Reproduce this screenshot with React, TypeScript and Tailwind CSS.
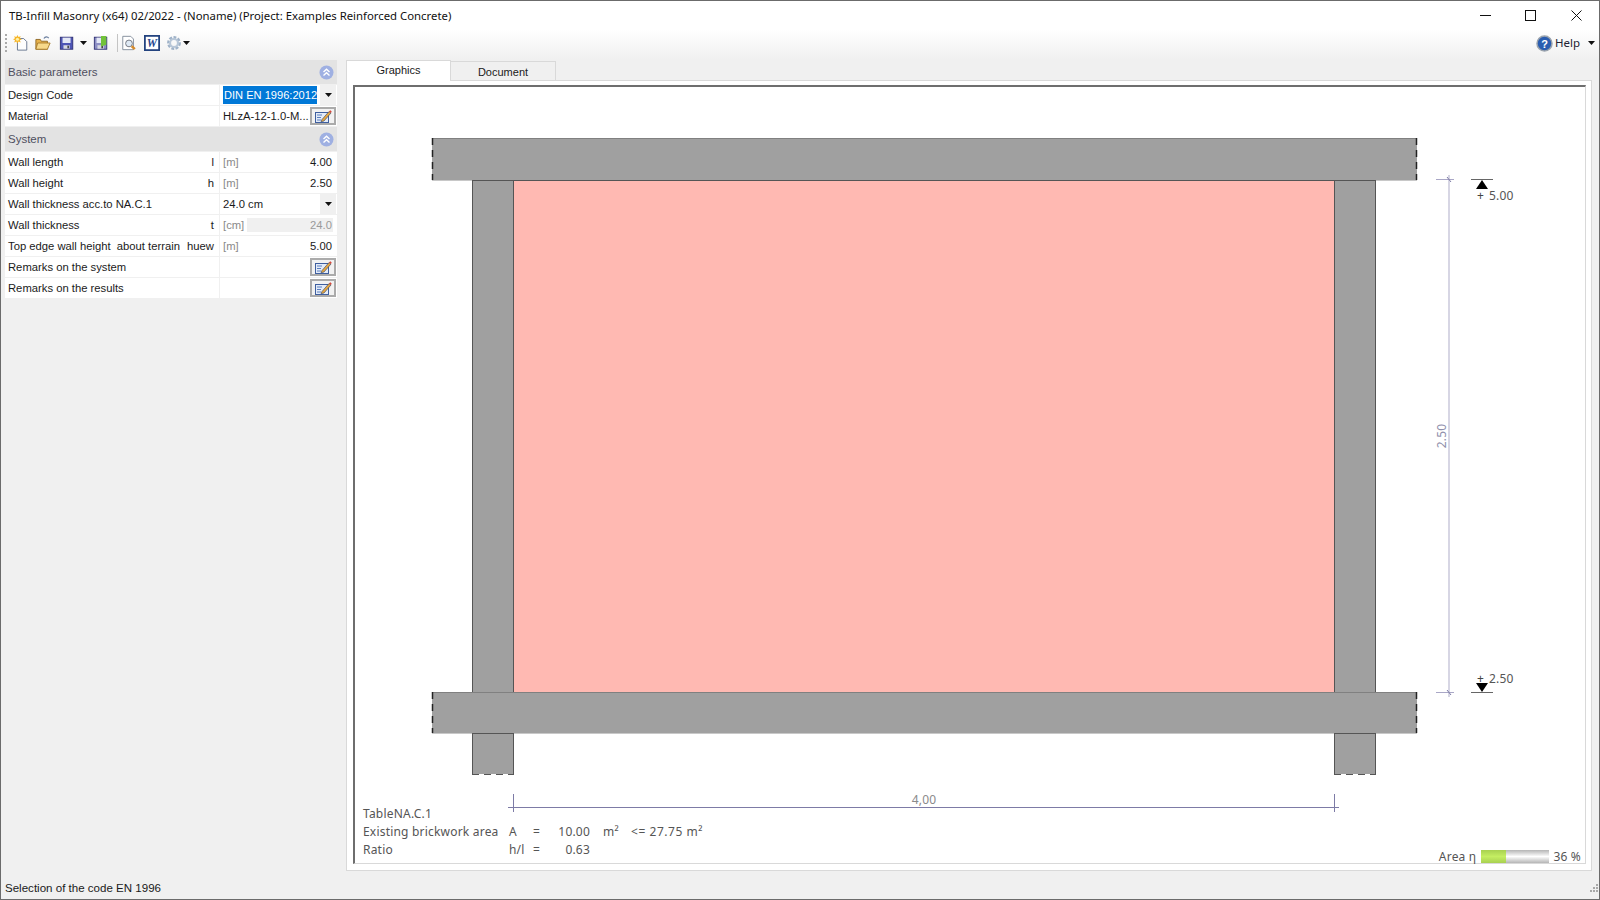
import React from "react";

interface ParamRow {
  label: string;
  symbol?: string;
  unit?: string;
  value?: string;
  kind?: "number" | "combo" | "readonly" | "edit";
}

const systemRows: ParamRow[] = [
  { label: "Wall length", symbol: "l", unit: "[m]", value: "4.00" },
  { label: "Wall height", symbol: "h", unit: "[m]", value: "2.50" },
  { label: "Wall thickness acc.to NA.C.1", value: "24.0 cm", kind: "combo" },
  { label: "Wall thickness", symbol: "t", unit: "[cm]", value: "24.0", kind: "readonly" },
  { label: "Top edge wall height  about terrain", symbol: "huew", unit: "[m]", value: "5.00" },
  { label: "Remarks on the system", kind: "edit" },
  { label: "Remarks on the results", kind: "edit" },
];

const DropArrow = () => (
  <svg width="7" height="4" viewBox="0 0 7 4" className="shrink-0">
    <path d="M0 0h7L3.500 4z" fill="#111" />
  </svg>
);

const EditIcon = () => (
  <svg width="18" height="14" viewBox="0 0 18 14">
    <rect x="1.500" y="3.500" width="13" height="10" fill="#e3ebf8" stroke="#3f5f9f" />
    <path d="M3 6h5M3 8.500h4M3 11h4" stroke="#5b7fc0" />
    <path d="M8 10.500L15 2.500l2 1.500-7 8-3 .8z" fill="#e6a640" stroke="#33415f" strokeWidth="0.6" />
    <path d="M15 2.500l2 1.500 .7-1.500-1.400-1.200z" fill="#d8463a" />
  </svg>
);

const EditButton = () => (
  <div className="mr-px flex h-[18px] w-[26px] shrink-0 items-center justify-center border-2 border-[#ababab] bg-[#f2f2f2]">
    <EditIcon />
  </div>
);

const CollapseIcon = () => (
  <svg width="15" height="15" viewBox="0 0 15 15" className="shrink-0">
    <circle cx="7.500" cy="7.500" r="7" fill="#9fb0e2" />
    <path d="M4.500 7l3-2.800 3 2.800M4.500 10.500l3-2.800 3 2.800" fill="none" stroke="#fff" strokeWidth="1.400" />
  </svg>
);

const SectionHeader = ({ title, className }: { title: string; className: string }) => (
  <div className={`flex items-center justify-between bg-[#e3e3e3] pl-[3px] pr-[3px] text-[11.5px] text-[#4f4f5f] ${className}`}>
    <span className="pt-px">{title}</span>
    <CollapseIcon />
  </div>
);

const Row = ({ row }: { row: ParamRow }) => (
  <div className="flex h-[20px] gap-px">
    <div className="flex w-[214px] items-center justify-between bg-white pl-[3px] pr-[5px]">
      <span className="whitespace-pre">{row.label}</span>
      {row.symbol && <span>{row.symbol}</span>}
    </div>
    <div className="flex flex-1 items-center bg-white pl-[3px]">
      {row.kind === "combo" && (
        <>
          <span className="flex-1 pt-px">{row.value}</span>
          <div className="mr-px flex h-full w-[16px] items-center justify-center bg-[#f0f0f0]">
            <DropArrow />
          </div>
        </>
      )}
      {row.kind === "edit" && (
        <div className="ml-auto">
          <EditButton />
        </div>
      )}
      {(row.kind === undefined || row.kind === "number" || row.kind === "readonly") && (
        <>
          <span className="w-[24px] text-[#8a8a8a]">{row.unit}</span>
          <span
            className={`mr-[4px] flex h-[14px] flex-1 items-center justify-end pr-px ${
              row.kind === "readonly" ? "bg-[#f0f0f0] text-[#9a9a9a]" : ""
            }`}
          >
            {row.value}
          </span>
        </>
      )}
    </div>
  </div>
);

const ToolIcon = ({ children, className = "" }: { children: React.ReactNode; className?: string }) => (
  <svg width="16" height="16" viewBox="0 0 18 18" className={`shrink-0 ${className}`}>
    {children}
  </svg>
);

const SaveDisk = ({ color = "#4e55b5" }: { color?: string }) => (
  <>
    <rect x="1.500" y="2.500" width="14" height="13.500" fill={color} stroke="#2d2f73" />
    <rect x="4" y="3" width="9" height="6" fill="#e4e8f6" />
    <rect x="5" y="11.500" width="7" height="4" fill="#d7d9e3" />
    <rect x="9.500" y="12" width="1.600" height="3" fill="#333" />
  </>
);

const Toolbar = () => (
  <div className="flex h-[29px] items-center bg-gradient-to-b from-white to-[#f0f0f0] pb-[3px] pl-[4px] pr-[4px]">
    <div className="mr-[6px] h-[18px] w-[2px] border-l-2 border-dotted border-[#aaaaaa]" />
    <ToolIcon className="mr-[6px]">
      <path d="M5 4h7l3.500 3.500V17H5z" fill="#fdfdfd" stroke="#5f6f8a" />
      <path d="M5 0l1.200 2.300L8.700 1.300 7.700 3.600 10 4.800 7.700 6 8.700 8.300 6.200 7.300 5 9.600 3.800 7.300 1.300 8.300 2.300 6 0 4.800 2.300 3.600 1.300 1.300 3.800 2.300z" fill="#f6b426" />
      <circle cx="5" cy="4.800" r="1.800" fill="#fff2a8" />
    </ToolIcon>
    <ToolIcon className="mr-[8px]">
      <path d="M1 5h5l1 2h7v9H1z" fill="#e7b24c" stroke="#8c6420" />
      <path d="M3 9h14l-3 7H1z" fill="#f7d98a" stroke="#a67a2b" />
      <path d="M10 4c1.500-2.500 4-2.500 5.500-.5" fill="none" stroke="#6b7f9e" strokeWidth="1.300" />
    </ToolIcon>
    <ToolIcon className="mr-[5px]">
      <SaveDisk />
    </ToolIcon>
    <div className="mr-[6px]">
      <DropArrow />
    </div>
    <ToolIcon className="mr-[8px]">
      <SaveDisk color="#8d8fc4" />
      <path d="M9 1h6v10l-6 2z" fill="#72c23a" />
    </ToolIcon>
    <div className="mr-[3px] h-[18px] w-px bg-[#c4c4c4]" />
    <ToolIcon className="mr-[7px]">
      <path d="M2 1.500h9l3 3v12H2z" fill="#fff" stroke="#7c8796" />
      <circle cx="9" cy="9.500" r="3.800" fill="#dfeaf5" stroke="#6b6f78" />
      <path d="M12 12.500l3.500 3.500" stroke="#d58a2c" strokeWidth="2.800" />
    </ToolIcon>
    <ToolIcon className="mr-[6px]">
      <rect x="1" y="1" width="16" height="16" fill="#fff" stroke="#23437f" strokeWidth="2" />
      <text x="9" y="13.500" textAnchor="middle" fontSize="13" fontWeight="700" fontStyle="italic" fontFamily="Liberation Serif, serif" fill="#23468f">
        W
      </text>
    </ToolIcon>
    <ToolIcon className="mr-[1px]">
      <circle cx="9" cy="9" r="6" fill="none" stroke="#9fb2c8" strokeWidth="3.500" strokeDasharray="3 1.500" />
      <circle cx="9" cy="9" r="4.500" fill="none" stroke="#b8c7d8" strokeWidth="2.500" />
    </ToolIcon>
    <DropArrow />
    <div className="ml-auto flex items-center">
      <svg width="17" height="17" viewBox="0 0 17 17" className="mr-[2px]">
        <circle cx="8.500" cy="8.500" r="7.500" fill="#2a5db0" stroke="#9aa3ad" strokeWidth="1.500" />
        <text x="8.500" y="12.500" textAnchor="middle" fill="#fff" fontSize="11" fontWeight="700" fontFamily="Liberation Sans, sans-serif">
          ?
        </text>
      </svg>
      <span className="mr-[9px] w-[24px] font-['Noto_Sans',sans-serif] text-[11.5px] text-[#222233]">Help</span>
      <DropArrow />
    </div>
  </div>
);

const Drawing = () => (
  <svg viewBox="355 87 1230 776" className="absolute inset-0 h-full w-full" fontFamily="Noto Sans, sans-serif">
    {/* infill and columns */}
    <rect x="513" y="180" width="821" height="512" fill="#ffb9b2" />
    <rect x="472.500" y="180.500" width="41" height="512" fill="#a0a0a0" stroke="#555" />
    <rect x="1334.500" y="180.500" width="41" height="512" fill="#a0a0a0" stroke="#555" />
    {/* stubs below the lower beam */}
    <rect x="472" y="733" width="41.500" height="41" fill="#a0a0a0" />
    <rect x="1334" y="733" width="41.500" height="41" fill="#a0a0a0" />
    <path d="M472.500 733v41M513.500 733v41M1334.500 733v41M1375.500 733v41" stroke="#555" />
    <path d="M472 774.500h42M1334 774.500h42" stroke="#555" strokeDasharray="7 5" />
    {/* beams */}
    <rect x="432" y="138" width="985" height="42" fill="#a0a0a0" />
    <rect x="432" y="692" width="985" height="41" fill="#a0a0a0" />
    <path d="M432 138.500h985M432 692.500h985" stroke="#808080" />
    <path d="M432 180.500h985M432 733.500h985" stroke="#c8c8c8" />
    <path d="M472 180.500h42M513 180.500h821M1334 180.500h42M472 733.500h42M1334 733.500h42" stroke="#555" />
    <path d="M432.500 138v42M1416.500 138v42M432.500 692v41M1416.500 692v41" stroke="#222" strokeWidth="1.500" strokeDasharray="7 5" />
    {/* dimension right */}
    <path d="M1449 175v522" stroke="#bdbbd2" strokeWidth="1.200" />
    <path d="M1436 179.500h18M1436 692.500h18" stroke="#a9a7c6" />
    <path d="M1447 177l4 5M1447 690l4 5" stroke="#7d7ba6" />
    <text x="0" y="0" transform="translate(1446 436) rotate(-90)" textAnchor="middle" fontSize="12" fill="#8f8fac">
      2.50
    </text>
    {/* dimension bottom */}
    <path d="M513 807.500h821" stroke="#7d7ba6" />
    <path d="M513.500 794v18M1334.500 794v18M508 807.500h10M1329 807.500h10" stroke="#7d7ba6" />
    <text x="924" y="804" textAnchor="middle" fontSize="12" fill="#8a8a8a">
      4,00
    </text>
    {/* level markers */}
    <path d="M1471 179.500h22" stroke="#666" />
    <path d="M1482 180l6 9h-12z" fill="#000" />
    <text x="1477" y="200" fontSize="12" fill="#444">
      +
    </text>
    <text x="1489" y="200" fontSize="12" letterSpacing="0.2" fill="#555">
      5.00
    </text>
    <path d="M1471 692.500h22" stroke="#666" />
    <path d="M1482 692l-6-9h12z" fill="#000" />
    <text x="1477" y="683" fontSize="12" fill="#444">
      +
    </text>
    <text x="1489" y="683" fontSize="12" letterSpacing="0.2" fill="#555">
      2.50
    </text>
  </svg>
);

export default function App() {
  return (
    <div className="flex h-[900px] w-[1600px] flex-col overflow-hidden border-x border-t border-[#6b6b6b] bg-[#f0f0f0] font-['Liberation_Sans',sans-serif] text-[11.25px] text-[#1a1a1a]">
      {/* title bar */}
      <div className="flex h-[29px] items-center bg-white pl-[8px] font-['Noto_Sans',sans-serif] text-[11.35px] text-[#111]">
        <span>TB-Infill Masonry (x64) 02/2022 - (Noname) (Project: Examples Reinforced Concrete)</span>
        <div className="ml-auto flex items-center">
          <svg width="11" height="11" viewBox="0 0 11 11" className="mr-[34px]">
            <path d="M0 5.500h11" stroke="#111" />
          </svg>
          <svg width="11" height="11" viewBox="0 0 11 11" className="mr-[35px]">
            <rect x="0.500" y="0.500" width="10" height="10" fill="none" stroke="#111" />
          </svg>
          <svg width="11" height="11" viewBox="0 0 11 11" className="mr-[17px]">
            <path d="M0.500 0.500l10 10M10.500 0.500l-10 10" stroke="#111" />
          </svg>
        </div>
      </div>
      <Toolbar />

      <div className="flex min-h-0 flex-1">
        {/* parameter panel */}
        <div className="flex w-[336px] shrink-0 flex-col gap-px pl-[4px] pt-px">
          <SectionHeader title="Basic parameters" className="h-[24px]" />
          <div className="flex h-[20px] gap-px">
            <div className="flex w-[214px] items-center bg-white pl-[3px]">Design Code</div>
            <div className="flex flex-1 items-center bg-white pl-[3px]">
              <span className="flex h-[18px] w-[94px] items-center whitespace-nowrap bg-[#0078d7] pl-[1px] text-[11.1px] text-white">DIN EN 1996:2012</span>
              <div className="ml-auto mr-px flex h-full w-[16px] items-center justify-center bg-[#f0f0f0]">
                <DropArrow />
              </div>
            </div>
          </div>
          <div className="flex h-[20px] gap-px">
            <div className="flex w-[214px] items-center bg-white pl-[3px]">Material</div>
            <div className="flex flex-1 items-center justify-between bg-white pl-[3px]">
              <span className="whitespace-nowrap">HLzA-12-1.0-M...</span>
              <EditButton />
            </div>
          </div>
          <SectionHeader title="System" className="h-[24px]" />
          {systemRows.map((row) => (
            <Row key={row.label} row={row} />
          ))}
        </div>

        {/* graphics area */}
        <div className="flex flex-1 flex-col pl-[9px] pr-[7px]">
          <div className="flex h-[21px] items-end text-[11px]">
            <div className="z-10 -mb-px flex h-[21px] w-[105px] items-start justify-center border border-b-0 border-[#d9d9d9] bg-white pt-px">
              Graphics
            </div>
            <div className="flex h-[19px] w-[105px] items-center justify-center border border-b-0 border-l-0 border-[#d9d9d9] bg-[#f0f0f0] pt-[2px]">
              Document
            </div>
          </div>
          <div className="flex h-[791px] flex-col border border-[#d9d9d9] bg-white pb-[6px] pl-[6px] pr-[5px] pt-[4px]">
            <div className="relative flex-1 border-b border-l-2 border-r border-t-2 border-[#d9d9d9] border-l-[#6e6e6e] border-t-[#6e6e6e] font-['Noto_Sans',sans-serif] text-[12px] tracking-[0.2px] text-[#555]">
              <Drawing />
              <div className="absolute bottom-[4px] left-[8px] grid grid-cols-[146px_24px_20px_37px_13px_28px_auto] items-center leading-[18px]">
                <span className="col-span-7">TableNA.C.1</span>
                <span>Existing brickwork area</span>
                <span>A</span>
                <span>=</span>
                <span className="text-right">10.00</span>
                <span />
                <span>m²</span>
                <span className="whitespace-nowrap tracking-[0.55px]">&lt;= 27.75 m²</span>
                <span>Ratio</span>
                <span>h/l</span>
                <span>=</span>
                <span className="text-right">0.63</span>
              </div>
              <div className="absolute bottom-0 right-[4px] flex h-[13px] items-center">
                <span className="mr-[5px]">Area η</span>
                <div className="mr-[4px] h-[13px] w-[68px] bg-gradient-to-b from-[#b5b5b5] via-white to-[#b5b5b5]">
                  <div className="h-full bg-gradient-to-b from-[#a8d050] via-[#c4ee62] to-[#a8d050]" style={{ width: "36%" }} />
                </div>
                <span>36 %</span>
              </div>
            </div>
          </div>
        </div>
      </div>

      {/* status bar */}
      <div className="flex h-[28px] items-center border-b border-[#6b6b6b] pl-[4px] pt-[6px] text-[11.55px]">
        Selection of the code EN 1996
        <svg width="10" height="10" viewBox="0 0 10 10" className="mb-[1px] ml-auto" fill="#a8a8a8">
          <rect x="7" y="1" width="2" height="2" />
          <rect x="4" y="4" width="2" height="2" />
          <rect x="7" y="4" width="2" height="2" />
          <rect x="1" y="7" width="2" height="2" />
          <rect x="4" y="7" width="2" height="2" />
          <rect x="7" y="7" width="2" height="2" />
        </svg>
      </div>
    </div>
  );
}
